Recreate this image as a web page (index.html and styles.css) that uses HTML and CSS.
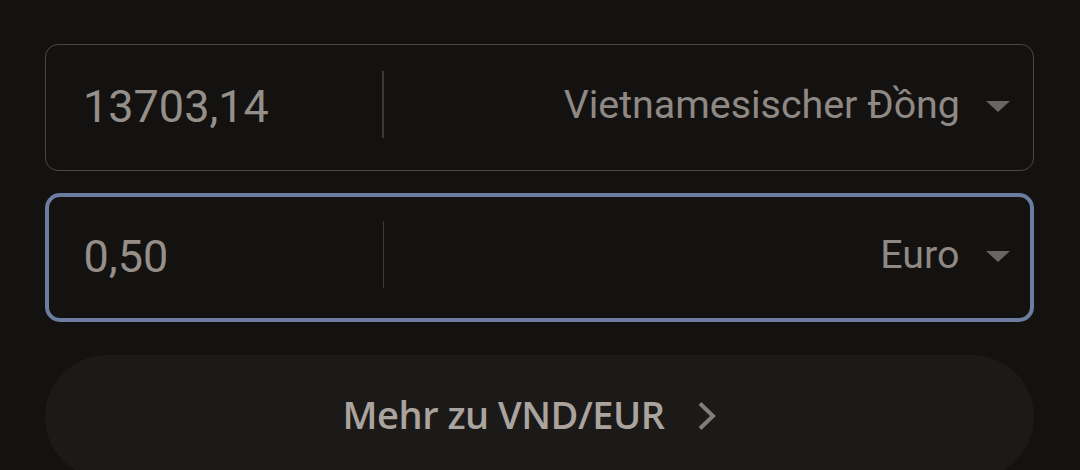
FILE: index.html
```html
<!DOCTYPE html>
<html lang="de">
<head>
<meta charset="utf-8">
<link rel="stylesheet" href="styles.css">
</head>
<body>
<div class="converter">
  <div class="field">
    <div class="value">13703,14</div>
    <div class="divider"></div>
    <div class="currency">
      <span class="label">Vietnamesischer Đồng</span>
      <svg class="caret" width="26" height="13" viewBox="0 0 26 13"><path d="M1 1 L25 1 L13 12 Z" fill="#6a6562"/></svg>
    </div>
  </div>
  <div class="field active">
    <div class="value">0,50</div>
    <div class="divider"></div>
    <div class="currency">
      <span class="label">Euro</span>
      <svg class="caret" width="26" height="13" viewBox="0 0 26 13"><path d="M1 1 L25 1 L13 12 Z" fill="#6a6562"/></svg>
    </div>
  </div>
  <button class="more">
    <span>Mehr zu VND/EUR</span>
    <svg class="chev" width="20" height="30" viewBox="0 0 20 30"><path d="M3 2.5 L16 15 L3 27.5" fill="none" stroke="#827d79" stroke-width="4"/></svg>
  </button>
</div>
</body>
</html>
```

FILE: styles.css
```css
html, body {
  margin: 0;
  padding: 0;
  background: #141211;
  height: 470px;
  overflow: hidden;
}
.converter {
  padding: 44px 46px 0 45px;
  display: flex;
  flex-direction: column;
  font-family: Roboto, "Liberation Sans", sans-serif;
}
.field {
  box-sizing: border-box;
  height: 127px;
  border: 1.5px solid #4b4745;
  border-radius: 13px;
  display: flex;
  align-items: center;
  padding: 0 22px 0 37px;
  background: #141211;
}
.field.active {
  margin-top: 22px;
  height: 129px;
  border: 4px solid #6b7e9f;
  padding: 0 19.5px 0 34.5px;
  border-radius: 15px;
}
.value {
  flex: 0 0 299px;
  color: #958f8a;
  font-size: 45px;
  line-height: 1;
  margin-top: -2px;
}
.divider {
  width: 1.5px;
  height: 67px;
  background: #3c3937;
  margin-top: -6px;
}
.currency {
  flex: 1;
  display: flex;
  justify-content: flex-end;
  align-items: center;
  gap: 25px;
  color: #8f8985;
  font-size: 39.4px;
  margin-top: -6px;
}
.caret {
  margin-top: 4px;
}
.more {
  margin-top: 33px;
  height: 124px;
  border: none;
  border-radius: 62px;
  background: #1c1a19;
  display: flex;
  align-items: center;
  justify-content: center;
  gap: 33px;
  color: #aba49e;
  font-family: "Open Sans", Roboto, sans-serif;
  font-weight: 600;
  font-size: 38px;
  padding: 0 19px 0 0;
}
.more span {
  margin-top: -6px;
  letter-spacing: -0.5px;
}
.chev {
  margin-top: -2px;
}
```
